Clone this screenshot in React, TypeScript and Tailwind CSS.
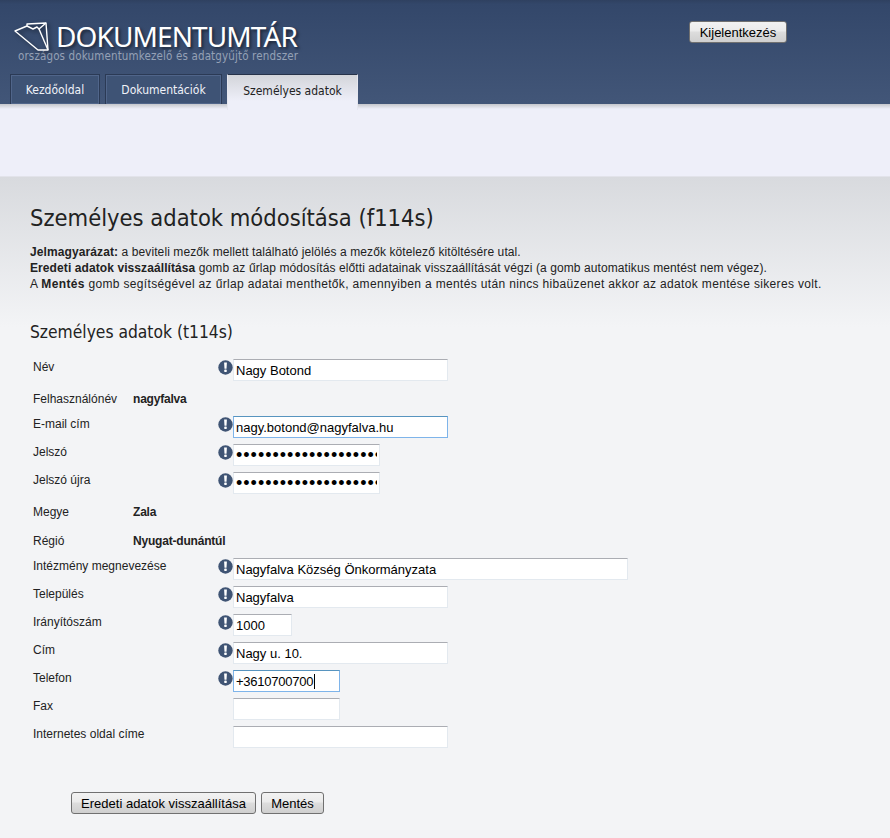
const tahoma = "font-['DejaVu_Sans_Condensed','DejaVu_Sans',sans-serif]";
const arial = "font-['Liberation_Sans',Arial,sans-serif]";

type Row = {
  label: string;
  value?: string;
  width?: string;
  required?: boolean;
  focus?: boolean;
  password?: boolean;
  caret?: boolean;
  bold?: boolean;
};

const rows: Row[] = [
  { label: "Név", value: "Nagy Botond", width: "w-[215px]", required: true },
  { label: "Felhasználónév", value: "nagyfalva", bold: true },
  { label: "E-mail cím", value: "nagy.botond@nagyfalva.hu", width: "w-[215px]", required: true, focus: true },
  { label: "Jelszó", value: "••••••••••••••••••••", width: "w-[147px]", required: true, password: true },
  { label: "Jelszó újra", value: "••••••••••••••••••••", width: "w-[147px]", required: true, password: true },
  { label: "Megye", value: "Zala", bold: true },
  { label: "Régió", value: "Nyugat-dunántúl", bold: true },
  { label: "Intézmény megnevezése", value: "Nagyfalva Község Önkormányzata", width: "w-[395px]", required: true },
  { label: "Település", value: "Nagyfalva", width: "w-[215px]", required: true },
  { label: "Irányítószám", value: "1000", width: "w-[59px]", required: true },
  { label: "Cím", value: "Nagy u. 10.", width: "w-[215px]", required: true },
  { label: "Telefon", value: "+3610700700", width: "w-[107px]", required: true, focus: true, caret: true },
  { label: "Fax", value: "", width: "w-[107px]" },
  { label: "Internetes oldal címe", value: "", width: "w-[215px]" },
];

function Mark() {
  return (
    <svg width="15" height="15" viewBox="0 0 15 15" className="shrink-0 block">
      <circle cx="7.5" cy="7.5" r="7.2" fill="#3f5474" />
      <path d="M6.1 2.6h2.8l-.4 6.2h-2z" fill="#fff" />
      <rect x="6.3" y="9.6" width="2.4" height="2.4" rx="0.6" fill="#fff" />
    </svg>
  );
}

function FormRow({ row }: { row: Row }) {
  if (row.bold) {
    return (
      <div className="flex h-[29px] pl-[33px] pt-[4px] text-[12px] leading-[16px] text-[#222]">
        <span className="w-[100px]">{row.label}</span>
        <b className="tracking-[-0.2px]">{row.value}</b>
      </div>
    );
  }
  const border = row.focus
    ? "border-[#7eb4ea] border-t-[#5794bf]"
    : "border-[#e3e9ef] border-t-[#abadb3]";
  return (
    <div className="flex h-[28px] pl-[33px] text-[12px] leading-[16px] text-[#222]">
      <span className="w-[185px]">{row.label}</span>
      <div className="w-[15px] pt-[1px] shrink-0">{row.required && <Mark />}</div>
      <div className={`relative h-[22px] ${row.width}`}>
        <input
          readOnly
          value={row.value}
          className={`block w-full h-full bg-white border px-[2px] text-[#000] outline-none overflow-hidden ${border} ${
            row.password ? "text-[18px] tracking-[1px]" : "text-[13px]"
          } ${row.caret ? "tracking-[-0.25px]" : ""} ${arial}`}
        />
        {row.caret && <span className="absolute left-[81px] top-[4px] h-[15px] w-px bg-black" />}
      </div>
    </div>
  );
}

function Btn({ children, width }: { children: string; width: string }) {
  return (
    <button className={`block h-[22px] ${width} rounded-[3px] border border-[#707070] bg-[linear-gradient(#f2f2f2_0%,#ebebeb_45%,#dddddd_50%,#cfcfcf_100%)] text-[13px] text-[#000] leading-none ${arial}`}>
      {children}
    </button>
  );
}

export default function App() {
  return (
    <div className={`min-h-[838px] bg-[#f3f4f6] ${arial}`}>
      {/* fejléc */}
      <header className="h-[104px] bg-[linear-gradient(#2f4160_0%,#33476a_4%,#425678_100%)] flex flex-col">
        <div className="flex justify-between h-[74px] shrink-0">
          <div className="pl-[14px] pt-[21px] flex flex-col">
            <div className="flex items-center h-[30px]">
              <svg width="36" height="30" viewBox="0 0 36 30" fill="none" stroke="#fff" strokeWidth="1.4" strokeLinejoin="round" className="drop-shadow-[2px_2px_2px_rgba(0,0,0,0.5)]">
                <path d="M1 10 L13 5 L13 3 L32 2 L34 29 L24 29 Z" />
                <path d="M13 5 L19 8 L23 6 L25 8 L32 2" />
                <path d="M25 8 L34 29" />
              </svg>
              <span className="ml-[6px] font-['Noto_Sans',sans-serif] font-normal text-[28px] leading-none text-white tracking-[-0.9px] [text-shadow:2px_2px_3px_rgba(0,0,0,0.5)]">
                DOKUMENTUMTÁR
              </span>
            </div>
            <span className={`-mt-[1px] pl-[4px] text-[11.5px] leading-[12px] tracking-[0.14px] text-[#95a1b6] ${tahoma}`}>
              országos dokumentumkezelő és adatgyűjtő rendszer
            </span>
          </div>
          <div className="pt-[21px] pr-[103px]">
            <Btn width="w-[98px]">Kijelentkezés</Btn>
          </div>
        </div>
        <nav className={`flex items-start h-[30px] pl-[10px] gap-[5px] text-[12px] ${tahoma}`}>
          <a className="w-[90px] h-[30px] flex items-center justify-center text-[#f0f2f8] border border-b-0 border-[#2b3a55] shadow-[inset_0_0_0_1px_#50658a] bg-[#3e5375]">Kezdőoldal</a>
          <a className="w-[117px] h-[30px] flex items-center justify-center text-[#f0f2f8] border border-b-0 border-[#2b3a55] shadow-[inset_0_0_0_1px_#50658a] bg-[#3e5375]">Dokumentációk</a>
          <a className="relative z-10 w-[131px] h-[36px] flex justify-center pt-[7px] leading-[18px] text-[#222] border border-b-0 border-[#27334a] border-x-[#e6e7ef] bg-[linear-gradient(#d3d5da,#eeeff9_75%)]">Személyes adatok</a>
        </nav>
      </header>

      <div className="h-[5px] bg-[linear-gradient(#c5c7cc,#eeeff9)]" />
      <div className="h-[68px] bg-[#eeeff9] border-b border-[#e2e3ea]" />

      {/* tartalom */}
      <main className="bg-[linear-gradient(#d8dade_0px,#f3f4f6_150px)] bg-no-repeat">
        <div className="h-[144px] pt-[26px] pl-[30px]">
          <h1 className={`text-[23.5px] leading-[30px] text-[#222] ${tahoma}`}>Személyes adatok módosítása (f114s)</h1>
          <p className="mt-[11px] text-[12px] leading-[16px] text-[#222]">
            <span className="block tracking-[0.1px]">
              <b>Jelmagyarázat:</b> a beviteli mezők mellett található jelölés a mezők kötelező kitöltésére utal.
            </span>
            <span className="block tracking-[0.09px]">
              <b>Eredeti adatok visszaállítása</b> gomb az űrlap módosítás előtti adatainak visszaállítását végzi (a gomb automatikus mentést nem végez).
            </span>
            <span className="block tracking-[0.34px]">
              A <b>Mentés</b> gomb segítségével az űrlap adatai menthetők, amennyiben a mentés után nincs hibaüzenet akkor az adatok mentése sikeres volt.
            </span>
          </p>
        </div>
        <h2 className={`pl-[30px] text-[17.3px] leading-[22px] text-[#222] ${tahoma}`}>Személyes adatok (t114s)</h2>
        <div className="mt-[16px]">
          {rows.map((row) => (
            <FormRow key={row.label} row={row} />
          ))}
        </div>
        <div className="flex gap-[5px] pl-[71px] pt-[38px]">
          <Btn width="w-[185px]">Eredeti adatok visszaállítása</Btn>
          <Btn width="w-[63px]">Mentés</Btn>
        </div>
      </main>
    </div>
  );
}
